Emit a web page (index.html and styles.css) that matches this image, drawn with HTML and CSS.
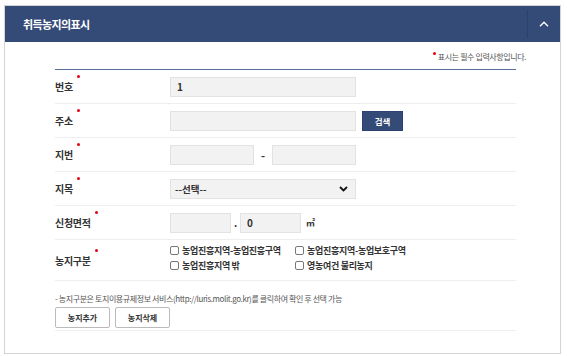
FILE: index.html
```html
<!DOCTYPE html>
<html>
<head>
<title>취득농지의표시</title>
<meta name="viewport" content="width=device-width, initial-scale=1">
<link rel="stylesheet" href="styles.css">
</head>
<body>

<div class="panel">
  <div class="panel-head">
    <h2 class="panel-title">취득농지의표시</h2>
    <button type="button" class="toggle" aria-label="접기">
      <svg width="10" height="6" viewBox="0 0 10 6"><path d="M1 5.2 L5 1.2 L9 5.2" fill="none" stroke="#fff" stroke-width="1.4"/></svg>
    </button>
  </div>

  <div class="panel-body">
    <p class="req-note"><span class="dot"></span>표시는 필수 입력사항입니다.</p>

    <div class="form">
      <div class="row">
        <label class="lbl">번호<span class="dot"></span></label>
        <div class="field"><input type="text" class="inp w-full" value="1"></div>
      </div>

      <div class="row">
        <label class="lbl">주소<span class="dot"></span></label>
        <div class="field">
          <input type="text" class="inp w-full">
          <button type="button" class="btn-search">검색</button>
        </div>
      </div>

      <div class="row">
        <label class="lbl">지번<span class="dot"></span></label>
        <div class="field">
          <input type="text" class="inp w-half">
          <span class="dash">-</span>
          <input type="text" class="inp w-half">
        </div>
      </div>

      <div class="row">
        <label class="lbl">지목<span class="dot"></span></label>
        <div class="field">
          <div class="select w-full">
            <span>--선택--</span>
            <svg width="9" height="6" viewBox="0 0 9 6"><path d="M1 1 L4.5 4.5 L8 1" fill="none" stroke="#111" stroke-width="1.8"/></svg>
          </div>
        </div>
      </div>

      <div class="row">
        <label class="lbl">신청면적<span class="dot"></span></label>
        <div class="field">
          <input type="text" class="inp w-area">
          <span class="point">.</span>
          <input type="text" class="inp w-area" value="0">
          <span class="unit">㎡</span>
        </div>
      </div>

      <div class="row row-tall">
        <label class="lbl">농지구분<span class="dot"></span></label>
        <div class="checks">
          <label class="chk"><span class="box"></span>농업진흥지역-농업진흥구역</label>
          <label class="chk"><span class="box"></span>농업진흥지역-농업보호구역</label>
          <label class="chk"><span class="box"></span>농업진흥지역 밖</label>
          <label class="chk"><span class="box"></span>영농여건 불리농지</label>
        </div>
      </div>
    </div>

    <div class="foot">
      <p class="foot-note">- 농지구분은 토지이용규제정보 서비스(http://luris.molit.go.kr)를 클릭하여 확인 후 선택 가능</p>
      <div class="foot-btns">
        <button type="button" class="btn-line">농지추가</button>
        <button type="button" class="btn-line">농지삭제</button>
      </div>
    </div>
  </div>
</div>

</body>
</html>
```

FILE: styles.css
```css
body {
  margin: 0;
  padding: 5px 4px;
  background: #fff;
  font-family: "Noto Sans CJK KR", "Noto Sans", sans-serif;
  color: #333;
}

.panel {
  width: 557px;
  border: 1px solid #d4d4d4;
  box-sizing: border-box;
}

.panel-head {
  height: 36px;
  background-color: #344a77;
  display: flex;
  align-items: center;
  justify-content: space-between;
}

.panel-title {
  margin: 0 0 0 18px;
  font-size: 11px;
  font-weight: bold;
  color: #fff;
  letter-spacing: -0.6px;
}

.toggle {
  width: 32px;
  height: 28px;
  border: none;
  border-left: 1px solid #2c4069;
  background: transparent;
  display: flex;
  align-items: center;
  justify-content: center;
  padding: 0;
  margin-right: 1px;
}

.panel-body {
  padding: 0 44px 22px 50px;
}

.req-note {
  margin: 0;
  height: 26px;
  display: flex;
  align-items: center;
  justify-content: flex-end;
  padding-top: 1px;
  font-size: 8px;
  color: #555;
  letter-spacing: -0.4px;
  margin-right: -10px;
}

.req-note .dot {
  margin: -6px 2px 0 0;
}

.dot {
  display: inline-block;
  width: 3px;
  height: 3px;
  border-radius: 50%;
  background: #e60012;
  vertical-align: top;
}

.form {
  border-top: 1px solid #5a6f9c;
}

.row {
  height: 33px;
  border-bottom: 1px solid #eee;
  display: flex;
  align-items: center;
}

.row-tall {
  height: 40px;
}

.lbl {
  width: 115px;
  font-size: 10px;
  font-weight: bold;
  color: #333;
  letter-spacing: -0.3px;
  align-self: center;
}

.lbl .dot {
  margin: -4px 0 0 4px;
}

.field {
  display: flex;
  align-items: center;
}

.inp {
  height: 20px;
  box-sizing: border-box;
  border: 1px solid #e2e2e2;
  background: #f2f2f2;
  padding: 0 6px;
  font-family: inherit;
  font-size: 10px;
  font-weight: bold;
  color: #333;
  outline: none;
}

.w-full { width: 186px; }
.w-half { width: 84px; }
.w-area { width: 61px; }

.btn-search {
  margin-left: 6px;
  width: 41px;
  height: 20px;
  border: 1px solid #2d4170;
  background-color: #344a77;
  color: #fff;
  font-family: inherit;
  font-size: 8.5px;
  font-weight: bold;
  padding: 0;
}

.dash {
  width: 18px;
  text-align: center;
  font-size: 11px;
  font-weight: bold;
}

.point {
  width: 9px;
  text-align: center;
  font-size: 10px;
  font-weight: bold;
}

.unit {
  margin-left: 5px;
  font-size: 9px;
  font-weight: bold;
}

.select {
  height: 20px;
  box-sizing: border-box;
  border: 1px solid #e2e2e2;
  background: #f2f2f2;
  padding: 0 7px 0 4px;
  display: flex;
  align-items: center;
  justify-content: space-between;
  font-size: 9.5px;
  font-weight: bold;
}

.checks {
  display: grid;
  grid-template-columns: 125px auto;
  row-gap: 2px;
  font-size: 9px;
  font-weight: bold;
  color: #333;
  letter-spacing: -0.3px;
  padding-bottom: 4px;
}

.chk {
  display: flex;
  align-items: center;
  line-height: 13px;
}

.box {
  width: 7px;
  height: 7px;
  border: 1px solid #777;
  border-radius: 2px;
  margin-right: 3px;
  background: #fff;
}

.foot {
  padding-top: 12px;
}

.foot-note {
  margin: 0;
  font-size: 8px;
  color: #555;
  letter-spacing: -0.4px;
}

.foot-btns {
  display: flex;
  gap: 5px;
  margin-top: 3px;
  padding-bottom: 2px;
  border-bottom: 1px solid #eee;
}

.btn-line {
  width: 55px;
  height: 21px;
  border: 1px solid #bbb;
  border-radius: 2px;
  background: #fff;
  font-family: inherit;
  font-size: 8px;
  font-weight: bold;
  color: #333;
  padding: 0;
}
```
